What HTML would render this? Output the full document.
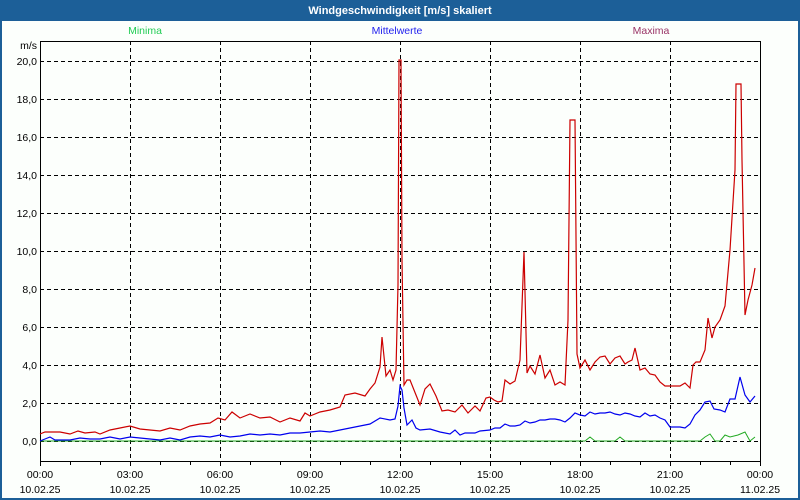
<!DOCTYPE html>
<html><head><meta charset="utf-8"><style>
html,body{margin:0;padding:0;width:800px;height:500px;overflow:hidden;background:#fff}
svg{display:block}
text{font-family:"Liberation Sans",sans-serif;font-size:10.5px}
</style></head><body>
<svg width="800" height="500" xmlns="http://www.w3.org/2000/svg">
<rect x="0" y="0" width="800" height="500" fill="#1c5f98"/>
<rect x="2" y="21" width="796" height="477" fill="#fcfffc"/>
<text x="400" y="14" fill="#fff" font-weight="bold" text-anchor="middle" style="font-size:11px">Windgeschwindigkeit [m/s] skaliert</text>
<text x="145" y="34" fill="#22cc55" text-anchor="middle">Minima</text>
<text x="397" y="34" fill="#2222ee" text-anchor="middle">Mittelwerte</text>
<text x="651" y="34" fill="#993366" text-anchor="middle">Maxima</text>
<g stroke="#000" stroke-width="1" stroke-dasharray="4,3" fill="none">
<path d="M40 61.5H760M40 99.5H760M40 137.5H760M40 175.5H760M40 213.5H760M40 251.5H760M40 289.5H760M40 327.5H760M40 365.5H760M40 403.5H760M40 441.5H760"/>
<path d="M130.5 41V461M220.5 41V461M310.5 41V461M400.5 41V461M490.5 41V461M580.5 41V461M670.5 41V461"/>
</g>
<rect x="40.5" y="41.5" width="720" height="420" fill="none" stroke="#000"/>
<path d="M40.5 461V466M70.5 461V465M100.5 461V465M130.5 461V466M160.5 461V465M190.5 461V465M220.5 461V466M250.5 461V465M280.5 461V465M310.5 461V466M340.5 461V465M370.5 461V465M400.5 461V466M430.5 461V465M460.5 461V465M490.5 461V466M520.5 461V465M550.5 461V465M580.5 461V466M610.5 461V465M640.5 461V465M670.5 461V466M700.5 461V465M730.5 461V465M760.5 461V466" stroke="#000"/>
<g fill="#000" text-anchor="end">
<text x="37" y="49">m/s</text>
<text x="37" y="65">20,0</text><text x="37" y="103">18,0</text><text x="37" y="141">16,0</text><text x="37" y="179">14,0</text><text x="37" y="217">12,0</text><text x="37" y="255">10,0</text><text x="37" y="293">8,0</text><text x="37" y="331">6,0</text><text x="37" y="369">4,0</text><text x="37" y="407">2,0</text><text x="37" y="445">0,0</text>
</g>
<g fill="#000" text-anchor="middle">
<text x="40" y="478">00:00</text><text x="130" y="478">03:00</text><text x="220" y="478">06:00</text><text x="310" y="478">09:00</text><text x="400" y="478">12:00</text><text x="490" y="478">15:00</text><text x="580" y="478">18:00</text><text x="670" y="478">21:00</text><text x="760" y="478">00:00</text>
<text x="40" y="493">10.02.25</text><text x="130" y="493">10.02.25</text><text x="220" y="493">10.02.25</text><text x="310" y="493">10.02.25</text><text x="400" y="493">10.02.25</text><text x="490" y="493">10.02.25</text><text x="580" y="493">10.02.25</text><text x="670" y="493">10.02.25</text><text x="760" y="493">11.02.25</text>
</g>
<polyline fill="none" stroke="#22aa22" stroke-width="1" points="40,441 585,441 590,437 595,441 615,441 620,437 625,441 700,441 705,437 710,434 715,441 720,441 725,435 730,437 738,435 745,432 750,441 755,437"/>
<polyline fill="none" stroke="#0000ee" stroke-width="1.2" points="40,441 45,439 50,437 55,440 60,440 70,440 80,438 90,439 100,439 110,437 120,439 130,437 140,438 150,439 160,440 170,438 180,440 190,437 200,436 210,437 220,435 230,437 240,436 250,434 260,435 270,434 280,435 290,433 300,433 310,432 320,431 330,432 340,430 350,428 360,426 370,424 380,418 390,420 395,419 398,406 400,386 402,390 404,408 407,425 412,420 416,428 420,430 430,429 440,432 450,434 455,430 460,435 465,433 470,433 475,433 480,431 490,430 495,428 500,428 505,424 510,426 515,426 520,425 525,421 530,423 535,422 540,420 545,420 550,419 555,419 560,420 565,422 570,418 575,413 580,415 585,416 590,412 595,414 600,413 605,413 610,412 615,414 620,415 625,413 630,414 635,416 640,417 645,413 650,416 655,415 660,418 665,420 670,427 680,427 685,428 690,424 695,415 700,410 705,402 710,401 714,409 720,410 725,412 730,399 735,399 740,377 745,395 750,402 755,396"/>
<polyline fill="none" stroke="#cc0000" stroke-width="1.2" points="40,434 45,432 60,432 70,434 78,431 85,433 95,432 100,434 110,430 120,428 130,426 140,429 150,430 160,431 170,428 180,430 190,426 200,424 210,423 218,418 225,420 232,412 240,418 250,414 260,418 270,417 280,422 290,418 300,421 305,413 310,416 320,412 330,410 340,407 345,395 355,393 365,396 370,389 375,383 380,367 382,337 386,376 390,370 393,380 396,370 398,285 399,60 401,60 402,260 404,385 407,380 410,380 416,395 420,405 425,389 430,384 436,396 442,411 448,410 455,412 462,405 468,413 475,406 480,411 486,398 490,397 494,400 498,402 502,401 505,380 510,384 515,381 520,360 524,252 527,373 530,366 535,374 540,355 545,378 550,370 555,385 560,382 565,385 568,320 570,120 575,120 577,354 580,368 585,360 590,370 595,362 600,357 605,356 610,364 615,358 620,356 625,364 628,362 632,360 635,348 640,370 645,368 650,374 655,375 660,382 665,386 670,386 680,386 685,383 690,388 693,365 696,362 700,362 705,350 708,318 712,338 715,327 720,320 725,306 730,250 735,170 736,84 741,84 742,160 745,315 748,300 752,285 755,268"/>
</svg>
</body></html>
